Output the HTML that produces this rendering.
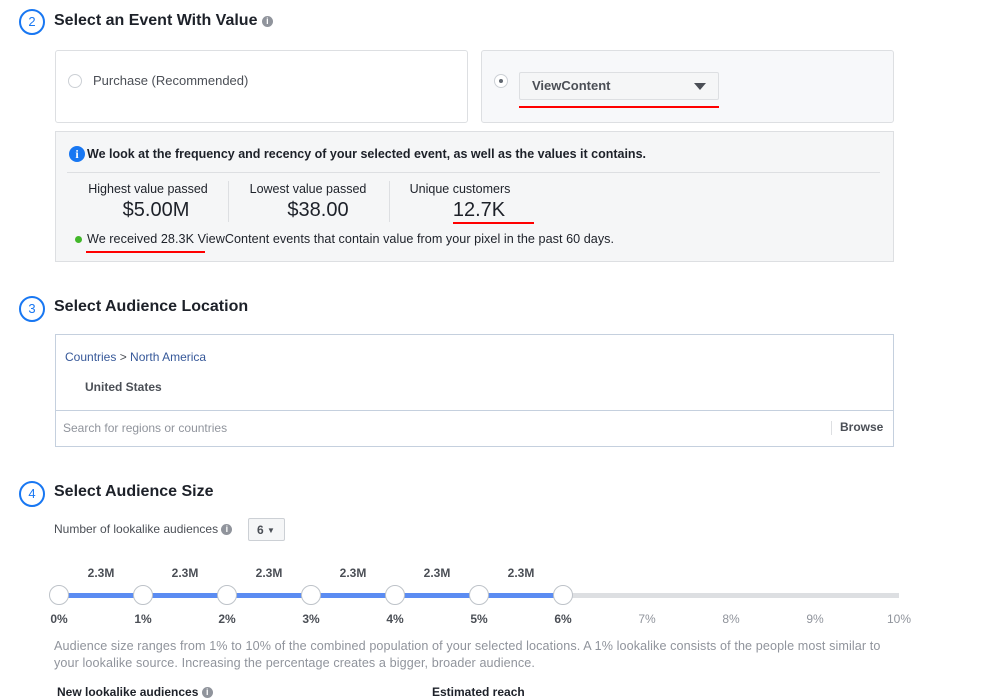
<!DOCTYPE html>
<html><head><meta charset="utf-8"><style>
body{margin:0;width:994px;height:699px;overflow:hidden;background:#fff;font-family:"Liberation Sans",sans-serif;color:#1d2129;position:relative}
.a{position:absolute;white-space:nowrap}
.circ{position:absolute;width:22px;height:22px;border:2px solid #1877f2;border-radius:50%;color:#1877f2;font-size:13px;text-align:center;line-height:22px}
.h{font-size:16px;font-weight:bold}
.info{display:inline-block;width:11px;height:11px;border-radius:50%;background:#90949c;color:#fff;font-size:9px;font-weight:bold;text-align:center;line-height:11px;vertical-align:1px}
.radio{position:absolute;width:12px;height:12px;border:1px solid #ccd0d5;border-radius:50%;background:#fff}
.knob{position:absolute;width:18px;height:18px;border:1px solid #bec3c9;border-radius:50%;background:#fff;top:585px}
.lab{position:absolute;font-size:12px;font-weight:bold;color:#4b4f56;top:566px;width:40px;text-align:center}
.pct{position:absolute;font-size:12px;top:612px;width:40px;text-align:center}
</style></head><body>
<div class="circ" style="left:19px;top:9px">2</div>
<div class="a h" style="left:54px;top:12px">Select an Event With Value <span class="info">i</span></div>

<div class="a" style="left:55px;top:50px;width:411px;height:71px;border:1px solid #dddfe2;border-radius:3px"></div>
<div class="radio" style="left:68px;top:74px"></div>
<div class="a" style="left:93px;top:73px;font-size:13px;color:#4b4f56">Purchase (Recommended)</div>

<div class="a" style="left:481px;top:50px;width:411px;height:71px;border:1px solid #dddfe2;border-radius:3px;background:#f7f8fa"></div>
<div class="radio" style="left:494px;top:74px"><div style="width:4px;height:4px;background:#606770;border-radius:50%;margin:4px"></div></div>
<div class="a" style="left:519px;top:72px;width:198px;height:26px;border:1px solid #dddfe2;border-radius:2px;background:#f5f6f7"></div>
<div class="a" style="left:532px;top:78px;font-size:13px;font-weight:bold;color:#4b4f56">ViewContent</div>
<div class="a" style="left:694px;top:83px;width:0;height:0;border-left:6px solid transparent;border-right:6px solid transparent;border-top:7px solid #4b4f56"></div>
<div class="a" style="left:519px;top:106px;width:200px;height:2px;background:#f00"></div>

<div class="a" style="left:55px;top:131px;width:837px;height:129px;border:1px solid #dddfe2;background:#f5f6f7"></div>
<div class="a" style="left:69px;top:146px;width:16px;height:16px;border-radius:50%;background:#1877f2;color:#fff;font-size:12px;font-weight:bold;text-align:center;line-height:16px;font-family:'Liberation Serif',serif">i</div>
<div class="a" style="left:87px;top:147px;font-size:12.5px;font-weight:bold">We look at the frequency and recency of your selected event, as well as the values it contains.</div>
<div class="a" style="left:67px;top:172px;width:813px;height:1px;background:#dddfe2"></div>
<div class="a" style="left:68px;top:182px;width:160px;text-align:center;font-size:12.5px;color:#1d2129">Highest value passed</div>
<div class="a" style="left:68px;top:199px;width:176px;text-align:center;font-size:20px">$5.00M</div>
<div class="a" style="left:228px;top:181px;width:1px;height:41px;background:#dddfe2"></div>
<div class="a" style="left:228px;top:182px;width:160px;text-align:center;font-size:12.5px">Lowest value passed</div>
<div class="a" style="left:238px;top:199px;width:160px;text-align:center;font-size:20px">$38.00</div>
<div class="a" style="left:389px;top:181px;width:1px;height:41px;background:#dddfe2"></div>
<div class="a" style="left:380px;top:182px;width:160px;text-align:center;font-size:12.5px">Unique customers</div>
<div class="a" style="left:399px;top:199px;width:160px;text-align:center;font-size:20px">12.7K</div>
<div class="a" style="left:453px;top:222px;width:81px;height:2px;background:#f00"></div>
<div class="a" style="left:75px;top:236px;width:7px;height:7px;border-radius:50%;background:#42b72a"></div>
<div class="a" style="left:87px;top:232px;font-size:12.6px;letter-spacing:0.05px">We received 28.3K ViewContent events that contain value from your pixel in the past 60 days.</div>
<div class="a" style="left:86px;top:251px;width:119px;height:2px;background:#f00"></div>

<div class="circ" style="left:19px;top:296px">3</div>
<div class="a h" style="left:54px;top:298px">Select Audience Location</div>
<div class="a" style="left:55px;top:334px;width:837px;height:111px;border:1px solid #c5d0de"></div>
<div class="a" style="left:56px;top:410px;width:837px;height:1px;background:#c5d0de"></div>
<div class="a" style="left:65px;top:350px;font-size:12px;color:#365899">Countries <span style="color:#4b4f56">&gt;</span> North America</div>
<div class="a" style="left:85px;top:380px;font-size:12px;font-weight:bold;color:#4b4f56">United States</div>
<div class="a" style="left:63px;top:421px;font-size:12px;color:#90949c">Search for regions or countries</div>
<div class="a" style="left:831px;top:421px;width:1px;height:14px;background:#dddfe2"></div>
<div class="a" style="left:840px;top:420px;font-size:12px;font-weight:bold;color:#4b4f56">Browse</div>

<div class="circ" style="left:19px;top:481px">4</div>
<div class="a h" style="left:54px;top:483px">Select Audience Size</div>
<div class="a" style="left:54px;top:522px;font-size:12px;color:#4b4f56">Number of lookalike audiences <span class="info">i</span></div>
<div class="a" style="left:248px;top:518px;width:37px;height:23px;border:1px solid #ccd0d5;border-radius:2px;background:#f5f6f7;font-size:12px;font-weight:bold;color:#4b4f56;line-height:23px;padding-left:8px;box-sizing:border-box">6 <span style="font-size:8px;vertical-align:1px">▼</span></div>

<div class="a" style="left:59px;top:593px;width:840px;height:5px;background:#dddfe2"></div>
<div class="a" style="left:59px;top:593px;width:504px;height:5px;background:#5b8cf2"></div>
<div class="knob" style="left:49px"></div><div class="knob" style="left:133px"></div><div class="knob" style="left:217px"></div><div class="knob" style="left:301px"></div><div class="knob" style="left:385px"></div><div class="knob" style="left:469px"></div><div class="knob" style="left:553px"></div>
<div class="lab" style="left:81px">2.3M</div><div class="lab" style="left:165px">2.3M</div><div class="lab" style="left:249px">2.3M</div><div class="lab" style="left:333px">2.3M</div><div class="lab" style="left:417px">2.3M</div><div class="lab" style="left:501px">2.3M</div>
<div class="pct" style="left:39px;font-weight:bold;color:#4b4f56">0%</div><div class="pct" style="left:123px;font-weight:bold;color:#4b4f56">1%</div><div class="pct" style="left:207px;font-weight:bold;color:#4b4f56">2%</div><div class="pct" style="left:291px;font-weight:bold;color:#4b4f56">3%</div><div class="pct" style="left:375px;font-weight:bold;color:#4b4f56">4%</div><div class="pct" style="left:459px;font-weight:bold;color:#4b4f56">5%</div><div class="pct" style="left:543px;font-weight:bold;color:#4b4f56">6%</div>
<div class="pct" style="left:627px;color:#90949c">7%</div><div class="pct" style="left:711px;color:#90949c">8%</div><div class="pct" style="left:795px;color:#90949c">9%</div><div class="pct" style="left:879px;color:#90949c">10%</div>

<div class="a" style="left:54px;top:638px;font-size:12.6px;color:#90949c;line-height:17px;letter-spacing:0.1px">Audience size ranges from 1% to 10% of the combined population of your selected locations. A 1% lookalike consists of the people most similar to<br>your lookalike source. Increasing the percentage creates a bigger, broader audience.</div>
<div class="a" style="left:57px;top:685px;font-size:12px;font-weight:bold;color:#1d2129">New lookalike audiences <span class="info">i</span></div>
<div class="a" style="left:432px;top:685px;font-size:12px;font-weight:bold;color:#1d2129">Estimated reach</div>
</body></html>
